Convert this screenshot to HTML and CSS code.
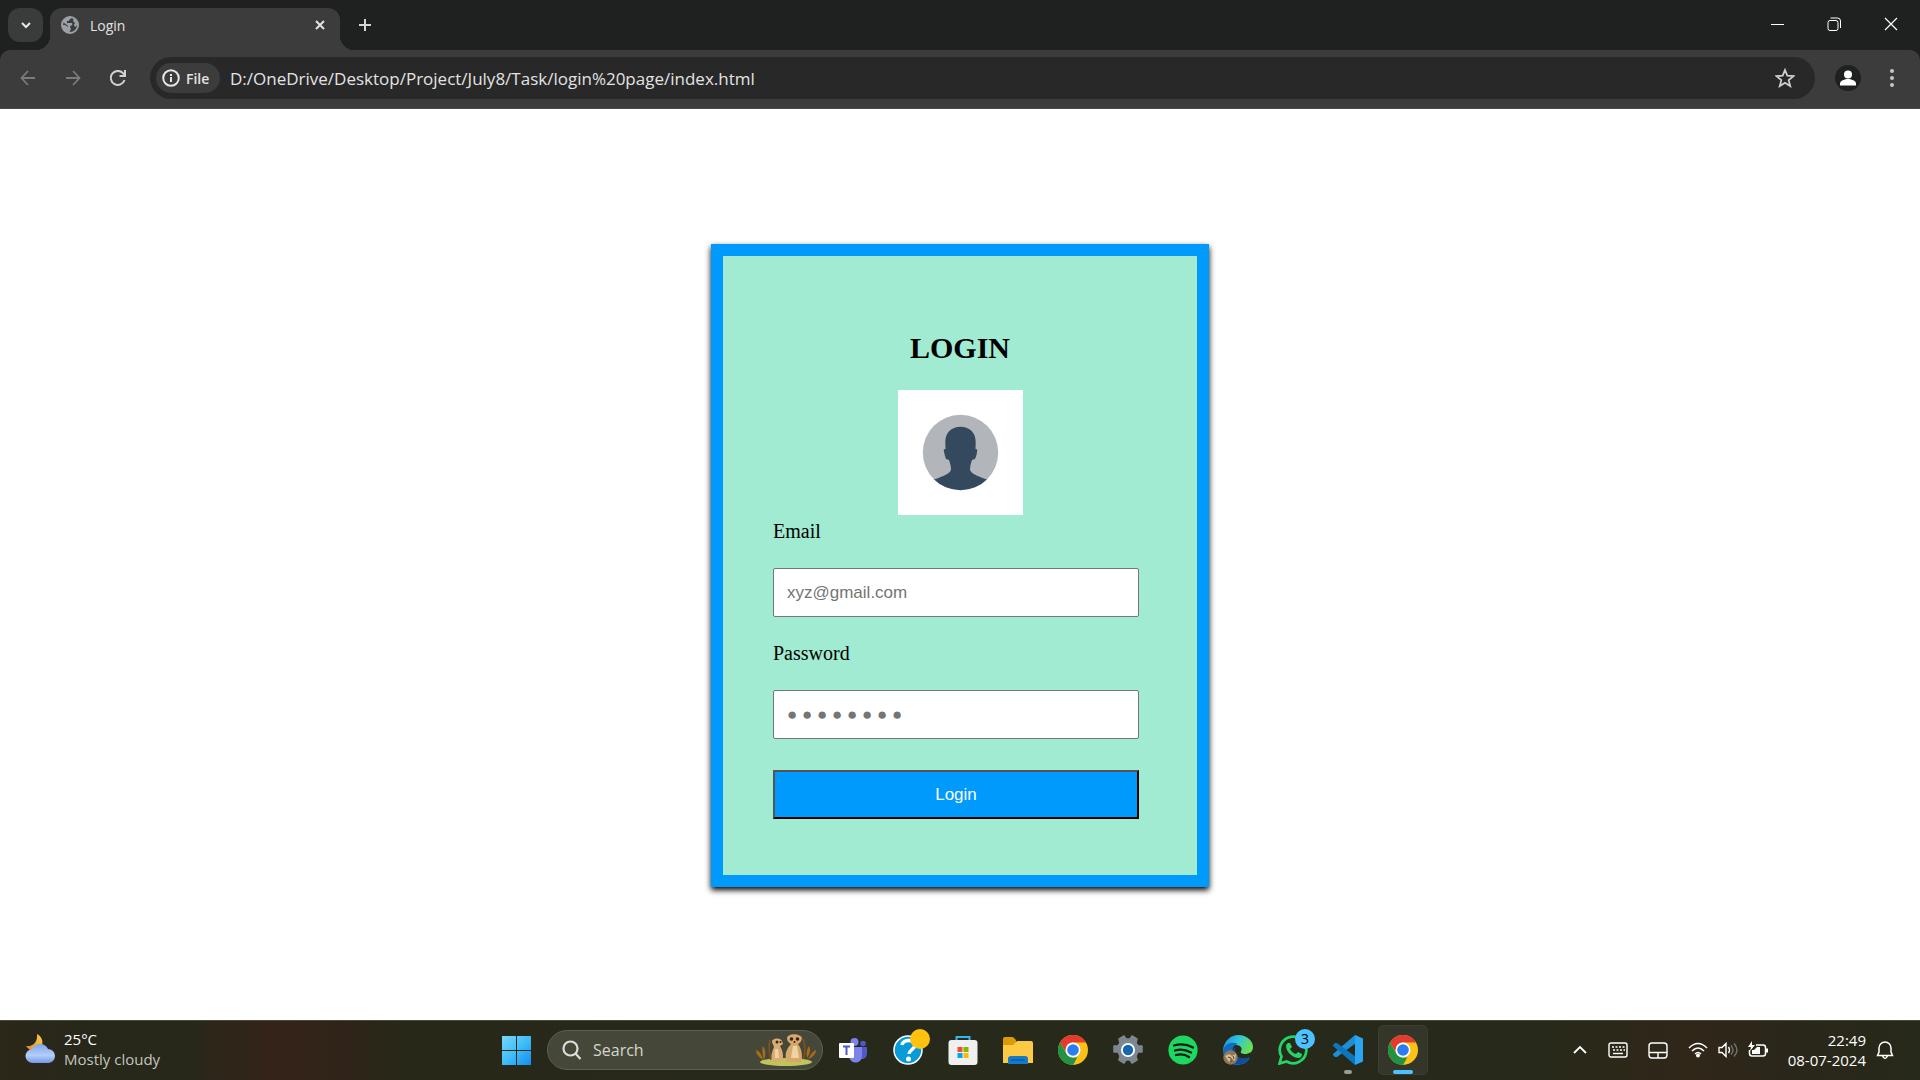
FILE: index.html
```html
<!DOCTYPE html>
<html lang="en">
<head>
<meta charset="utf-8">
<title>Login</title>
<link rel="stylesheet" href="styles.css">
</head>
<body>
<svg class="defs" aria-hidden="true">
  <symbol id="chrome" viewBox="0 0 30 30">
    <circle cx="15" cy="15" r="15" fill="#fbc116"/>
    <path d="M2 7.500A15 15 0 0 1 28 7.500H15A7.500 7.500 0 0 0 8.500 11.250L7.600 17.100Z" fill="#e33b2e"/>
    <path d="M2 7.500L8.500 18.750A7.500 7.500 0 0 0 15 22.500H19.300L15 30A15 15 0 0 1 2 7.500Z" fill="#229342"/>
    <circle cx="15" cy="15" r="7.500" fill="#fff"/>
    <circle cx="15" cy="15" r="5.800" fill="#2a7df0"/>
  </symbol>
</svg>

<header class="browser">
  <div class="tab-strip">
    <button class="tab-search" aria-label="Search tabs"><svg width="12" height="8" viewBox="0 0 12 8"><path d="M2 2l4 4 4-4" fill="none" stroke="#e8e8e8" stroke-width="2"/></svg></button>
    <div class="tab">
      <svg width="18" height="18" viewBox="0 0 18 18"><circle cx="9" cy="9" r="8" fill="none" stroke="#9aa0a6" stroke-width="2"/><path d="M10 1c1 2-2 2-2 4H6v2h5c1 1 0 3-2 3 0 2 1 2 1 3l-2 4C3 17 1 13 1 9h3l3 2v-1L2 6c1-3 5-5 8-5zM17 9c-2 0-2 2-3 2l-1-2 1-2-2-2 1-3c2 1 4 4 4 7z" fill="#9aa0a6"/></svg>
      <span class="tab-title">Login</span>
      <button class="plain" aria-label="Close tab"><svg width="12" height="12" viewBox="0 0 12 12"><path d="M2 2l8 8M10 2l-8 8" stroke="#e3e3e3" stroke-width="2"/></svg></button>
    </div>
    <button class="plain new-tab" aria-label="New tab"><svg width="14" height="14" viewBox="0 0 14 14"><path d="M7 1v12M1 7h12" stroke="#d5d5d5" stroke-width="2"/></svg></button>
    <div class="window-controls">
      <button class="plain" aria-label="Minimize"><svg width="14" height="14" viewBox="0 0 14 14"><path d="M1 7.500h13" stroke="#fff"/></svg></button>
      <button class="plain" aria-label="Restore"><svg width="14" height="14" viewBox="0 0 14 14" fill="none" stroke="#fff"><rect x="1" y="3.500" width="10" height="10" rx="2"/><path d="M3.500 1h7a3 3 0 0 1 3 3v7"/></svg></button>
      <button class="plain" aria-label="Close"><svg width="14" height="14" viewBox="0 0 14 14"><path d="M1 1l12 12M13 1L1 13" stroke="#fff" stroke-width="1.200"/></svg></button>
    </div>
  </div>
  <div class="toolbar">
    <nav class="nav-buttons" aria-label="Navigation">
      <button class="plain" aria-label="Back"><svg width="16" height="16" viewBox="0 0 16 16" fill="none" stroke="#7b7b7b" stroke-width="1.800"><path d="M15 8H2M8 1L1.500 8L8 15"/></svg></button>
      <button class="plain" aria-label="Forward"><svg width="16" height="16" viewBox="0 0 16 16" fill="none" stroke="#7b7b7b" stroke-width="1.800"><path d="M1 8h13M8 1l6.500 7L8 15"/></svg></button>
      <button class="plain" aria-label="Reload"><svg width="16" height="16" viewBox="0 0 16 16" fill="none" stroke="#d0d0d0" stroke-width="2"><path d="M14.500 10A7 7 0 1 1 13 3.200L14.800 5.500M15 0v6H9.500"/></svg></button>
    </nav>
    <div class="address">
      <button class="file-chip"><svg width="18" height="18" viewBox="0 0 18 18"><circle cx="9" cy="9" r="7.800" fill="none" stroke="#e6e6e6" stroke-width="2"/><path d="M9 8v5M9 5v2" stroke="#e6e6e6" stroke-width="2"/></svg>File</button>
      <input class="url" type="text" aria-label="Address" value="D:/OneDrive/Desktop/Project/July8/Task/login%20page/index.html">
      <button class="plain" aria-label="Bookmark"><svg width="20" height="20" viewBox="0 0 20 20"><path d="M10 2l2.300 5.700 6.200.4-4.800 4 1.500 6L10 14.800 4.800 18.100l1.500-6-4.800-4 6.200-.4z" fill="none" stroke="#cfcfcf" stroke-width="1.800"/></svg></button>
    </div>
    <button class="profile" aria-label="Profile"><svg width="26" height="26" viewBox="0 0 26 26"><circle cx="13" cy="9.500" r="4" fill="#fff"/><path d="M5 20.500v-2c0-3 5-4.500 8-4.500s8 1.500 8 4.500v2z" fill="#fff"/></svg></button>
    <button class="plain" aria-label="Menu"><svg width="6" height="18" viewBox="0 0 6 18" fill="#c7c7c7"><circle cx="3" cy="2" r="2"/><circle cx="3" cy="9" r="2"/><circle cx="3" cy="16" r="2"/></svg></button>
  </div>
</header>

<main class="page">
  <form class="card">
    <h1 class="card-title">LOGIN</h1>
    <svg class="avatar" viewBox="0 0 125 125" role="img" aria-label="User">
      <clipPath id="round"><circle cx="62.500" cy="62.500" r="37.700"/></clipPath>
      <rect width="125" height="125" fill="#fff"/>
      <circle cx="62.500" cy="62.500" r="37.700" fill="#b2b6bb"/>
      <path clip-path="url(#round)" d="M62.500 36.700C72 36.700 77.700 43 77.700 52L77.500 59L79.300 59.500C79 63 78.500 66 77 69L74 70C73 73 72 76 72 80C74 85 83 87 90 90L95 105H30L35 90C42 87 51 85 53 80C53 76 52 73 51 70L48 69C47 66 46 63 45.700 59.500L47.500 59L47.300 52C47.300 43 53 36.700 62.500 36.700Z" fill="#34495e"/>
    </svg>
    <label for="email">Email</label>
    <input class="field" id="email" type="email" placeholder="xyz@gmail.com">
    <label for="password">Password</label>
    <input class="field" id="password" type="password" placeholder="● ● ● ● ● ● ● ●">
    <button class="submit" type="button">Login</button>
  </form>
</main>

<footer class="taskbar">
  <button class="weather">
    <svg width="32" height="32" viewBox="0 0 32 32">
      <defs><linearGradient id="cloud" x2="0" y2="1"><stop stop-color="#7ea5ee"/><stop offset=".6" stop-color="#b5cdfa"/><stop offset="1" stop-color="#6f98e6"/></linearGradient><linearGradient id="moon" x1="1" x2="0" y2="1"><stop stop-color="#f9cf45"/><stop offset="1" stop-color="#f0872a"/></linearGradient></defs>
      <path d="M13 1c6 3 7 10 3 15-4 3-11 2-14-3 7 1 12-4 11-12z" fill="url(#moon)"/>
      <path d="M9 30a7 7 0 0 1-1-14 9 9 0 0 1 16 0 7 7 0 0 1 0 14z" fill="url(#cloud)"/>
    </svg>
    <span class="weather-text"><span>25°C</span><span class="muted">Mostly cloudy</span></span>
  </button>
  <div class="apps">
    <button class="app" aria-label="Start"><svg width="30" height="30" viewBox="0 0 30 30"><defs><linearGradient id="win" x2="1" y2="1"><stop stop-color="#77d8fb"/><stop offset=".5" stop-color="#40bdf8"/><stop offset="1" stop-color="#118eee"/></linearGradient></defs><path d="M0 1h14v14H0zM15 1h14v14H15zM0 16h14v14H0zM15 16h14v14H15z" fill="url(#win)"/></svg></button>
    <label class="search">
      <svg width="20" height="20" viewBox="0 0 20 20" fill="none" stroke="#dcdcda" stroke-width="2.200"><circle cx="8.500" cy="8.500" r="7"/><path d="M13.500 13.500l5 5.500"/></svg>
      <input type="text" placeholder="Search" aria-label="Search">
      <svg width="60" height="32" viewBox="0 0 60 32">
        <ellipse cx="30" cy="28" rx="26" ry="4" fill="#bfc45b"/>
        <path d="M7 26C6 20 3 17 0 16c0 4 3 7 7 10zM8 26c-2-7-2-11-1-14 3 4 3 9 1 14zM52 25c3-5 5-8 8-9 0 4-4 8-8 9zM51 24c-1-5 0-9 2-12 2 4 1 8-2 12z" fill="#a96c16"/>
        <path d="M15 26c-2-7-3-13-1-20M47 25c3-6 2-14 0-20" fill="none" stroke="#82521d" stroke-width="1.500"/>
        <path d="M16 8c0-4 8-5 10-1l1 3-3 2c3 5 4 11 2 16h-9c-3-5-1-10 1-15z" fill="#d8ad73"/>
        <path d="M31 4c1-5 13-5 15 0-1 4-2 5-4 6 4 5 5 13 3 18H31c-3-6-1-13 4-18-2-1-4-3-4-6z" fill="#d6a96b"/>
        <path d="M19 15h3l1 9h-4zM37 12h4l2 12h-8z" fill="#efd3a4"/>
        <circle cx="21" cy="8" r="1.500" fill="#3b2418"/><circle cx="24.500" cy="8" r="1" fill="#3b2418"/><circle cx="35.500" cy="5" r="1.800" fill="#3b2418"/><circle cx="41.500" cy="5" r="1.800" fill="#3b2418"/><circle cx="38.500" cy="8" r="1" fill="#3b2418"/>
      </svg>
    </label>
    <button class="app" aria-label="Teams"><svg width="28" height="30" viewBox="0 0 28 30"><circle cx="15.500" cy="7" r="4" fill="#7b83eb"/><circle cx="24" cy="8.500" r="2.800" fill="#5059c9"/><path d="M19 12h9v7a5 5 0 0 1-8 4z" fill="#5059c9"/><path d="M10 12h13v8a6.500 6.500 0 0 1-13 2z" fill="#7b83eb"/><rect y="8" width="15" height="15" rx="1" fill="#fff"/><path d="M4 11.500h7M7.500 11.500V20" stroke="#5059c9" stroke-width="2"/></svg></button>
    <button class="app" aria-label="Help"><svg width="30" height="30" viewBox="0 0 30 30"><circle cx="15" cy="15" r="14" fill="#079bd9" stroke="#fff" stroke-width="1.500"/><path d="M9 10c1-6 13-6 13 0 0 4-6 5-6 9" fill="none" stroke="#fff" stroke-width="3.500"/><circle cx="15.500" cy="24" r="2.500" fill="#fff"/></svg><span class="badge gold"></span></button>
    <button class="app" aria-label="Store"><svg width="30" height="30" viewBox="0 0 30 30"><path d="M8.500 7V2h13v5" fill="none" stroke="#31b8f0" stroke-width="2"/><rect x=".5" y="5" width="29" height="25" rx="3" fill="#f0f0f0"/><path d="M9.500 12h5v5h-5z" fill="#f25022"/><path d="M15.500 12h5v5h-5z" fill="#7fba00"/><path d="M9.500 18h5v5h-5z" fill="#00a4ef"/><path d="M15.500 18h5v5h-5z" fill="#ffb900"/></svg></button>
    <button class="app" aria-label="File Explorer"><svg width="30" height="30" viewBox="0 0 30 30"><path d="M0 4q0-2 2-2h8l3 3v5H0z" fill="#d99b06"/><path d="M0 10h10l4-4h14q2 0 2 2v20H0z" fill="#fdca43"/><path d="M5 29v-5q0-3 3-3h14q3 0 3 3v5z" fill="#167ac6"/><path d="M8 25h14" stroke="#0b4f94"/></svg></button>
    <button class="app" aria-label="Chrome"><svg width="30" height="30"><use href="#chrome"/></svg></button>
    <button class="app" aria-label="Settings"><svg width="30" height="30" viewBox="0 0 30 30"><path d="M11 1l2 3h4l2-3 5 3-1 4 2 3h4v6h-4l-2 4 1 4-5 3-2-3h-4l-2 3-5-3 1-4-2-4H1v-6h4l2-3-1-4z" fill="#7c8791" stroke="#7c8791" stroke-width="1.500" stroke-linejoin="round"/><circle cx="15" cy="15" r="7" fill="#fff"/><circle cx="15" cy="15" r="5.200" fill="#1667ae"/></svg></button>
    <button class="app" aria-label="Spotify"><svg width="30" height="30" viewBox="0 0 30 30"><circle cx="15" cy="15" r="14.600" fill="#1ed760"/><path d="M6 10.500q10-3 19 2M7 15.500q8-2.500 16 2M8 20q7-2 13 2" fill="none" stroke="#111b13" stroke-width="2.300" stroke-linecap="round"/></svg></button>
    <button class="app" aria-label="Edge"><svg width="30" height="30" viewBox="0 0 30 30"><defs><linearGradient id="edge" x2="1" y2=".4"><stop stop-color="#1689d3"/><stop offset=".5" stop-color="#2fc3df"/><stop offset="1" stop-color="#68df57"/></linearGradient></defs><path d="M0 14C2 5 8 0 15 0c9 0 15 6 15 12 0 5-4 7-8 7-3 0-5-1-4-3 2-3-1-6-5-6C6 10 1 12 0 20z" fill="url(#edge)"/><path d="M0 15c2-7 10-9 15-6-7 1-7 10-1 14 4 3 9 2 13 0-3 5-8 7-13 7C6 30 0 23 0 15z" fill="#126bc0"/><path d="M13 12c-4 7 2 14 14 10-4 7-10 8-15 7-6-5-5-14 1-17z" fill="#0d4f9e"/><circle cx="7.500" cy="22.500" r="7.200" fill="#8d7959"/><path d="M2 21l4-2 3 2 4-2-1 7-3-2-3 3-2-3z" fill="#d4bd98"/><path d="M5 22l3 1v4M10 21l1 3" stroke="#67391f" fill="none"/></svg></button>
    <button class="app" aria-label="WhatsApp"><svg width="30" height="30" viewBox="0 0 30 30"><path d="M1.500 28.500l2-7a13.300 13.300 0 1 1 5 5z" fill="none" stroke="#25d366" stroke-width="2.700"/><path d="M10 8l2 0 2 4-2 2q2 4 6 5l2-2 4 2q0 4-4 4C13 22 8 16 8 11q0-2 2-3z" fill="#25d366"/></svg><span class="badge blue">3</span></button>
    <button class="app" aria-label="Visual Studio Code"><svg width="30" height="30" viewBox="0 0 30 30"><path d="M22 0L0 19q-.5 1 2 3l2 0L23 8z" fill="#1c8fd5"/><path d="M22 30L0 11q-.5-1 2-3l2 0L23 22z" fill="#0f75bb"/><path d="M22 0l7 3q1 0 1 1v22q0 1-1 1l-7 3z" fill="#2aa5f2"/></svg><span class="mark"></span></button>
    <button class="app active" aria-label="Chrome, Login"><svg width="30" height="30"><use href="#chrome"/></svg><span class="mark wide"></span></button>
  </div>
  <div class="tray">
    <button class="plain" aria-label="Hidden icons"><svg width="16" height="10" viewBox="0 0 16 10"><path d="M2 8l6-6 6 6" fill="none" stroke="#fff" stroke-width="1.800"/></svg></button>
    <button class="plain" aria-label="Touch keyboard"><svg width="20" height="16" viewBox="0 0 20 16" fill="none" stroke="#fff" stroke-width="1.400"><rect x="1" y="1" width="18" height="14" rx="2"/><path d="M4 5h13M5 8h12" stroke-dasharray="2 1.500"/><path d="M5 11.500h10"/></svg></button>
    <button class="plain" aria-label="Touchpad"><svg width="20" height="17" viewBox="0 0 20 17" fill="none" stroke="#fff" stroke-width="1.400"><rect x="1" y="1" width="18" height="15" rx="3"/><path d="M1 10.500h18M10 10.500V16"/></svg></button>
    <button class="plain status" aria-label="Network, volume and battery">
      <svg width="20" height="16" viewBox="0 0 20 16" fill="none" stroke="#fff" stroke-width="1.600"><path d="M1 6q9-9 18 0M4 9q6-6 12 0M7 12q3-3 6 0"/><circle cx="10" cy="13.500" r="1.200" fill="#fff"/></svg>
      <svg width="20" height="16" viewBox="0 0 20 16" fill="none" stroke="#fff" stroke-width="1.400"><path d="M1 5.500h3l4-4v13l-4-4H1zM10.500 5q2 3 0 6"/><path d="M13 3.500q4 4.500 0 9M16 1.500q6 6.500 0 13" stroke="#77756e"/></svg>
      <svg width="20" height="18" viewBox="0 0 20 18"><path d="M8 4h7q2.500 0 2.500 2.500v6Q17.500 15 15 15H4q-2.500 0-2.500-2.500V9" fill="none" stroke="#fff" stroke-width="1.500"/><path d="M4 9h2l3-3h3v7H4zM18 7.500h2v4h-2zM4 0L0 6h3L2 10l5-6H4z" fill="#fff"/></svg>
    </button>
    <button class="plain clock"><span>22:49</span><span>08-07-2024</span></button>
    <button class="plain" aria-label="Notifications"><svg width="18" height="20" viewBox="0 0 18 20" fill="none" stroke="#fff" stroke-width="1.500"><path d="M1.500 15.500L3 12V8a6 6 0 0 1 12 0v4l1.500 3.500zM6.500 16q2.500 5 5 0"/></svg></button>
  </div>
</footer>
</body>
</html>
```
FILE: styles.css
```css
* { box-sizing: border-box; }

body {
  margin: 0;
  min-height: 100vh;
  display: flex;
  flex-direction: column;
  background: #fff;
  font-family: "Open Sans", "Noto Sans", sans-serif;
}

button, input { font: inherit; }
button { cursor: pointer; }
svg { display: block; flex: none; }
.defs { display: none; }

.plain {
  display: flex;
  align-items: center;
  justify-content: center;
  padding: 0;
  border: 0;
  background: none;
  color: #fff;
}

/* Browser frame */
.browser { background: #1f2120; }

.tab-strip {
  display: flex;
  height: 50px;
  padding: 8px 0 0 8px;
}

.tab-search {
  display: flex;
  align-items: center;
  justify-content: center;
  width: 35px;
  height: 34px;
  margin-right: 7px;
  padding: 0;
  border: 0;
  border-radius: 12px;
  background: #3a3b3b;
}

.tab {
  position: relative;
  display: flex;
  align-items: center;
  gap: 11px;
  width: 290px;
  padding: 0 14px 8px 11px;
  border-radius: 12px 12px 0 0;
  background: #3c3c3c;
  color: #e3e3e3;
  font-size: 14px;
}

.tab::before,
.tab::after {
  content: "";
  position: absolute;
  bottom: 0;
  width: 14px;
  height: 14px;
}

.tab::before {
  right: 100%;
  background: radial-gradient(circle at 0 0, transparent 14px, #3c3c3c 14px);
}

.tab::after {
  left: 100%;
  background: radial-gradient(circle at 100% 0, transparent 14px, #3c3c3c 14px);
}

.tab-title { flex: 1; }
.new-tab { width: 50px; padding-bottom: 8px; }

.window-controls {
  display: flex;
  margin-left: auto;
  padding: 0 1px 10px 0;
}

.window-controls .plain { width: 57px; }

.toolbar {
  display: flex;
  align-items: center;
  gap: 20px;
  height: 59px;
  padding: 0 25px 2px 20px;
  border-bottom: 1px solid #494747;
  border-radius: 10px 10px 0 0;
  background: #3c3c3c;
}

.nav-buttons {
  display: flex;
  gap: 29px;
  margin-right: 4px;
}

.address {
  flex: 1;
  display: flex;
  align-items: center;
  gap: 10px;
  height: 42px;
  padding: 0 20px 0 6px;
  border-radius: 21px;
  background: #282828;
}

.file-chip {
  display: flex;
  align-items: center;
  gap: 6px;
  width: 64px;
  height: 30px;
  padding: 0 6px;
  border: 0;
  border-radius: 15px;
  background: #3c3c3c;
  color: #e3e3e3;
  font-size: 14px;
  font-weight: 600;
}

.url {
  flex: 1;
  min-width: 0;
  padding: 0;
  border: 0;
  background: none;
  color: #e3e3e3;
  font-size: 17px;
}

.profile {
  width: 26px;
  height: 26px;
  margin-right: 8px;
  padding: 0;
  border: 0;
  border-radius: 50%;
  background: #1f2120;
}

/* Login page */
.page {
  flex: 1;
  display: flex;
  align-items: center;
  justify-content: center;
  padding-top: 2px;
}

.card {
  display: flex;
  flex-direction: column;
  gap: 25px;
  width: 498px;
  max-width: 100%;
  padding: 75px 50px 56px;
  border: 12px solid #0099fc;
  background: #a0ebd1;
  box-shadow: 0 3px 6px #000;
  color: #000;
  font-family: "Liberation Serif", serif;
  font-size: 20px;
  line-height: 23px;
}

.card-title {
  margin: 0;
  font-size: 30px;
  line-height: 34px;
  text-align: center;
}

.avatar {
  align-self: center;
  width: 125px;
  height: 125px;
  margin-bottom: -20px;
}

.field,
.submit {
  height: 49px;
  margin-right: 8px;
  font-family: "Liberation Sans", sans-serif;
  font-size: 17px;
}

.field {
  padding: 0 13px;
  border: 1px solid #767676;
  border-radius: 2px;
  background: #fff;
}

.field::placeholder { color: #757575; }

.submit {
  margin-top: 6px;
  border: 2px outset #000;
  background: #0099fc;
  color: #fff;
}

/* Taskbar */
.taskbar {
  display: grid;
  grid-template-columns: 1fr auto 1fr;
  align-items: center;
  height: 60px;
  padding-bottom: 1px;
  border-top: 1px solid #45493a;
  background: linear-gradient(90deg, #2b2719, #27281a 5%, #28281a 10%, #352319 14%, #2f2419 18%, #282819 21%, #27291a 40%, #27291a 80%, #302719 88%, #2a271a 93%, #27291a);
  color: #fff;
  font-size: 15px;
  line-height: 20px;
}

.weather {
  display: flex;
  align-items: center;
  justify-self: start;
  gap: 8px;
  padding: 0 0 2px 24px;
  border: 0;
  background: none;
  color: #fff;
  text-align: left;
}

.weather-text,
.clock {
  display: flex;
  flex-direction: column;
}

.muted { color: #c5c5c0; }

.apps {
  display: flex;
  align-items: center;
  gap: 5px;
}

.app {
  position: relative;
  display: flex;
  align-items: center;
  justify-content: center;
  width: 50px;
  height: 50px;
  padding: 0;
  border: 1px solid transparent;
  border-radius: 5px;
  background: none;
}

.app.active {
  border-color: #3d3e30;
  background: #35362a;
}

.search {
  display: flex;
  align-items: center;
  gap: 11px;
  width: 276px;
  height: 40px;
  padding: 0 6px 0 14px;
  border: 1px solid #5d5f50;
  border-radius: 20px;
  background: #454839;
}

.search input {
  flex: 1;
  min-width: 0;
  padding: 0;
  border: 0;
  background: none;
  color: #fff;
  font-size: 16px;
}

.search input::placeholder { color: #d5d5d0; }

.badge {
  position: absolute;
  top: 3px;
  right: 2px;
  width: 20px;
  height: 20px;
  border-radius: 50%;
  color: #000;
  font-size: 14px;
  line-height: 20px;
}

.gold { background: #ffc20e; }
.blue { background: #4cc2ff; }

.mark {
  position: absolute;
  bottom: 0;
  left: 50%;
  width: 8px;
  height: 4px;
  border-radius: 2px;
  background: #9b9b94;
  transform: translateX(-50%);
}

.mark.wide {
  width: 20px;
  background: #4cc2ff;
}

.tray {
  display: flex;
  align-items: center;
  justify-self: end;
  gap: 20px;
  padding-right: 26px;
}

.status { gap: 10px; }

.clock {
  align-items: flex-end;
  margin-right: -10px;
}
```
